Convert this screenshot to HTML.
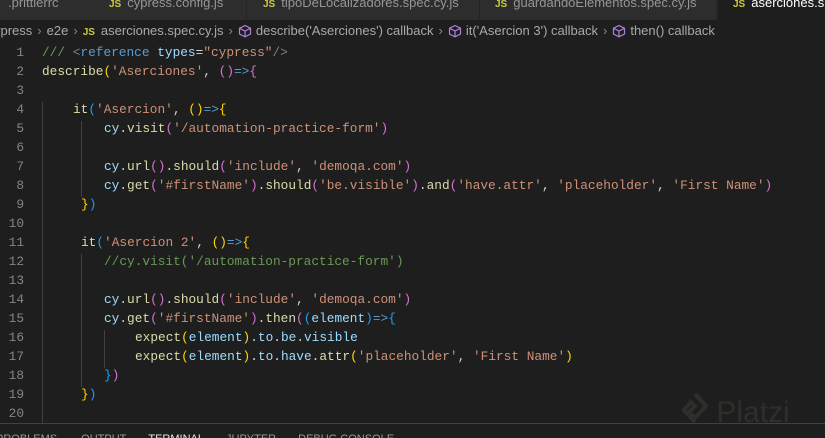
<!DOCTYPE html>
<html><head><meta charset="utf-8"><style>
body{margin:0;width:825px;height:437px;background:#1e1e1e;overflow:hidden;position:relative;font-family:"Liberation Sans",sans-serif}
.tabs{position:absolute;top:0;left:0;width:825px;height:20px;background:#252526}
.tab{position:absolute;top:0;height:20px;background:#2d2d2d;color:#969696;font-size:13px;line-height:6px;white-space:nowrap;border-right:1px solid #252526;overflow:hidden}
.tab.act{background:#1e1e1e;color:#fff}
.js{color:#cbcb41;font-weight:bold;font-size:10px;margin-right:6px}
.bc{position:absolute;top:22px;left:0;height:18px;line-height:18px;color:#a9a9a9;font-size:13px;white-space:nowrap}
.bc .s{color:#888;margin:0 5px}
.cube{display:inline-block;vertical-align:-3px;margin-right:4px}
.ln{position:absolute;left:0;width:24px;text-align:right;color:#858585;font-family:"Liberation Mono",monospace;font-size:12.8px}
.code{position:absolute;font-family:"Liberation Mono",monospace;font-size:12.8px;color:#d4d4d4;white-space:pre}
.f{color:#dcdcaa}.s1{color:#ce9178}.v{color:#9cdcfe}.y{color:#ffd700}.p{color:#da70d6}.b{color:#179fff}.c{color:#6a9955}.k{color:#569cd6}.g{color:#808080}
.guide{position:absolute;width:1px;background:#404040}
.panel{position:absolute;top:423px;left:0;width:825px;border-top:1px solid #414141;height:14px;color:#9a9a9a;font-size:11px;line-height:30px;white-space:nowrap;overflow:hidden}
</style></head><body>
<div class="tabs">
<div class="tab" style="left:0;width:92px;padding-left:8px">.prittierrc</div>
<div class="tab" style="left:94px;width:137px;padding-left:15px"><span class="js">JS</span>cypress.config.js</div>
<div class="tab" style="left:247px;width:216px;padding-left:16px"><span class="js">JS</span>tipoDeLocalizadores.spec.cy.js</div>
<div class="tab" style="left:480px;width:221px;padding-left:15px"><span class="js">JS</span>guardandoElementos.spec.cy.js</div>
<div class="tab act" style="left:718px;width:107px;padding-left:15px"><span class="js">JS</span>aserciones.spec.cy.js</div>
</div>
<div class="bc"><span style="margin-left:-6px">ypress</span><span class="s">›</span>e2e<span class="s">›</span><span class="js">JS</span>aserciones.spec.cy.js<span class="s">›</span><svg class="cube" width="14" height="14" viewBox="0 0 14 14"><path d="M7 1.5L12.5 4.3V10L7 12.8L1.5 10V4.3Z M1.5 4.3L7 7L12.5 4.3 M7 7V12.8" fill="none" stroke="#b180d7" stroke-width="1.2"/></svg>describe('Aserciones') callback<span class="s">›</span><svg class="cube" width="14" height="14" viewBox="0 0 14 14"><path d="M7 1.5L12.5 4.3V10L7 12.8L1.5 10V4.3Z M1.5 4.3L7 7L12.5 4.3 M7 7V12.8" fill="none" stroke="#b180d7" stroke-width="1.2"/></svg>it('Asercion 3') callback<span class="s">›</span><svg class="cube" width="14" height="14" viewBox="0 0 14 14"><path d="M7 1.5L12.5 4.3V10L7 12.8L1.5 10V4.3Z M1.5 4.3L7 7L12.5 4.3 M7 7V12.8" fill="none" stroke="#b180d7" stroke-width="1.2"/></svg>then() callback</div>

<div class="guide" style="left:42px;top:102px;height:321px"></div>
<div class="guide" style="left:81px;top:121px;height:76px"></div>
<div class="guide" style="left:81px;top:254px;height:133px"></div>
<div class="guide" style="left:104px;top:330px;height:38px"></div>

<div style="position:absolute;top:45px;left:0">
<div class="ln" style="top:0">1</div><div class="ln" style="top:19px">2</div><div class="ln" style="top:38px">3</div><div class="ln" style="top:57px">4</div><div class="ln" style="top:76px">5</div><div class="ln" style="top:95px">6</div><div class="ln" style="top:114px">7</div><div class="ln" style="top:133px">8</div><div class="ln" style="top:152px">9</div><div class="ln" style="top:171px">10</div><div class="ln" style="top:190px">11</div><div class="ln" style="top:209px">12</div><div class="ln" style="top:228px">13</div><div class="ln" style="top:247px">14</div><div class="ln" style="top:266px">15</div><div class="ln" style="top:285px">16</div><div class="ln" style="top:304px">17</div><div class="ln" style="top:323px">18</div><div class="ln" style="top:342px">19</div><div class="ln" style="top:361px">20</div>

<div class="code" style="top:0;left:42px"><span class="c">/// </span><span class="g">&lt;</span><span class="k">reference</span> <span class="v">types</span>=<span class="s1">"cypress"</span><span class="g">/&gt;</span></div>
<div class="code" style="top:19px;left:42px"><span class="f">describe</span><span class="y">(</span><span class="s1">'Aserciones'</span>, <span class="p">()</span><span class="k">=&gt;</span><span class="p">{</span></div>
<div class="code" style="top:57px;left:73px"><span class="f">it</span><span class="b">(</span><span class="s1">'Asercion'</span>, <span class="y">()</span><span class="k">=&gt;</span><span class="y">{</span></div>
<div class="code" style="top:76px;left:104px"><span class="v">cy</span>.<span class="f">visit</span><span class="p">(</span><span class="s1">'/automation-practice-form'</span><span class="p">)</span></div>
<div class="code" style="top:114px;left:104px"><span class="v">cy</span>.<span class="f">url</span><span class="p">()</span>.<span class="f">should</span><span class="p">(</span><span class="s1">'include'</span>, <span class="s1">'demoqa.com'</span><span class="p">)</span></div>
<div class="code" style="top:133px;left:104px"><span class="v">cy</span>.<span class="f">get</span><span class="p">(</span><span class="s1">'#firstName'</span><span class="p">)</span>.<span class="f">should</span><span class="p">(</span><span class="s1">'be.visible'</span><span class="p">)</span>.<span class="f">and</span><span class="p">(</span><span class="s1">'have.attr'</span>, <span class="s1">'placeholder'</span>, <span class="s1">'First Name'</span><span class="p">)</span></div>
<div class="code" style="top:152px;left:81px"><span class="y">}</span><span class="b">)</span></div>
<div class="code" style="top:190px;left:81px"><span class="f">it</span><span class="b">(</span><span class="s1">'Asercion 2'</span>, <span class="y">()</span><span class="k">=&gt;</span><span class="y">{</span></div>
<div class="code" style="top:209px;left:104px"><span class="c">//cy.visit('/automation-practice-form')</span></div>
<div class="code" style="top:247px;left:104px"><span class="v">cy</span>.<span class="f">url</span><span class="p">()</span>.<span class="f">should</span><span class="p">(</span><span class="s1">'include'</span>, <span class="s1">'demoqa.com'</span><span class="p">)</span></div>
<div class="code" style="top:266px;left:104px"><span class="v">cy</span>.<span class="f">get</span><span class="p">(</span><span class="s1">'#firstName'</span><span class="p">)</span>.<span class="f">then</span><span class="p">(</span><span class="b">(</span><span class="v">element</span><span class="b">)</span><span class="k">=&gt;</span><span class="b">{</span></div>
<div class="code" style="top:285px;left:135px"><span class="f">expect</span><span class="y">(</span><span class="v">element</span><span class="y">)</span>.<span class="v">to</span>.<span class="v">be</span>.<span class="v">visible</span></div>
<div class="code" style="top:304px;left:135px"><span class="f">expect</span><span class="y">(</span><span class="v">element</span><span class="y">)</span>.<span class="v">to</span>.<span class="v">have</span>.<span class="f">attr</span><span class="y">(</span><span class="s1">'placeholder'</span>, <span class="s1">'First Name'</span><span class="y">)</span></div>
<div class="code" style="top:323px;left:104px"><span class="b">}</span><span class="p">)</span></div>
<div class="code" style="top:342px;left:81px"><span class="y">}</span><span class="b">)</span></div>
</div>

<div style="position:absolute;left:682px;top:392px;color:#2e2e2b;font-size:30px;white-space:nowrap"><svg width="26" height="40" viewBox="0 0 26 40" style="vertical-align:-10px"><path d="M13 2L24 14L13 26L7 20L13 14L9 10L2 18L13 30" fill="none" stroke="#2e2e2b" stroke-width="4"/></svg> Platzi</div>

<div class="panel"><span style="margin-left:-4px">PROBLEMS</span><span style="margin-left:24px">OUTPUT</span><span style="margin-left:22px;color:#e7e7e7">TERMINAL</span><span style="margin-left:22px">JUPYTER</span><span style="margin-left:22px">DEBUG CONSOLE</span></div>
</body></html>
